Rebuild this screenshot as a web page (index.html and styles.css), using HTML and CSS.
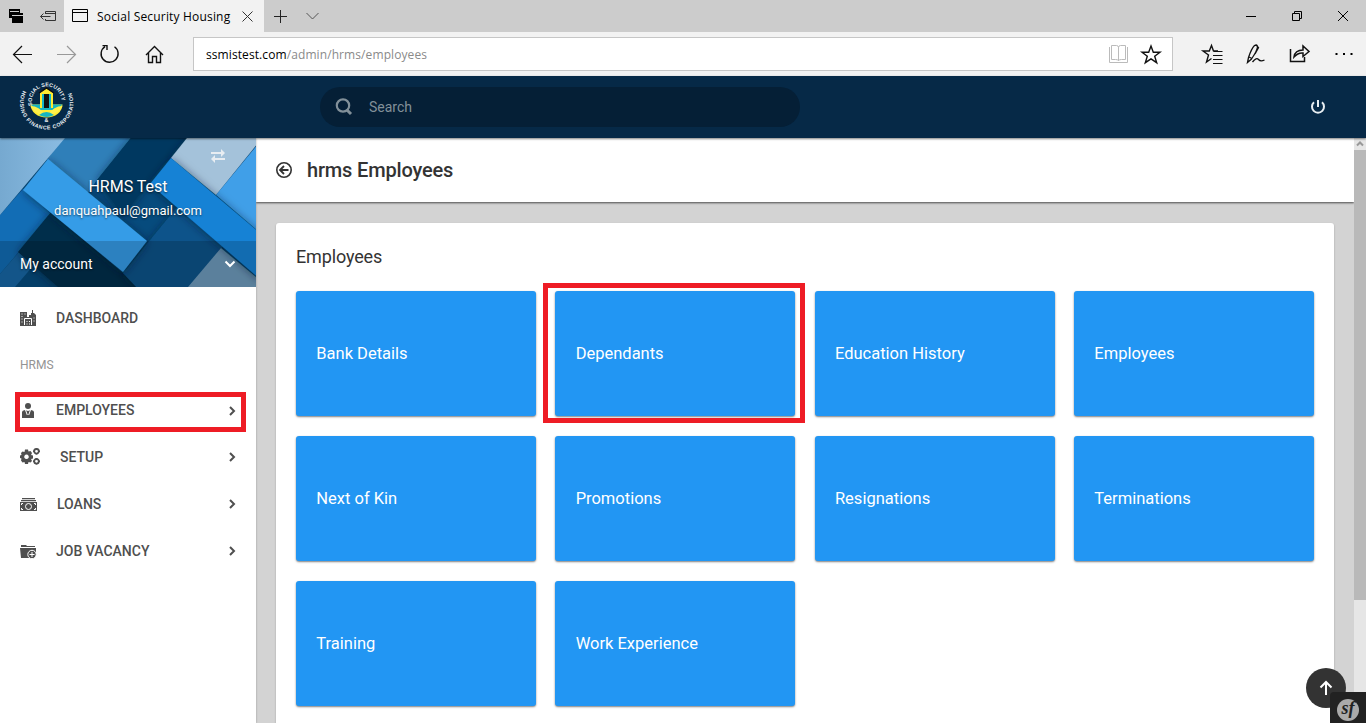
FILE: index.html
```html
<!DOCTYPE html>
<html lang="en">
<head>
<meta charset="utf-8">
<title>Social Security Housing</title>
<link rel="stylesheet" href="styles.css">
</head>
<body>
<div class="window">
  <div class="tabbar">
    <svg class="tab-tools" width="64" height="32" fill="none" stroke="#333">
      <path d="M9 9h11v4H12v5H9z" fill="#000" stroke="none"/><path d="M12 13h11v10H12z" fill="#000" stroke="none"/><path d="M10 11.500h9M12 15.500h11" stroke="#ccc"/>
      <path d="M45.500 14v-2.500h10v9h-10V19M45 13.500h10M40.500 16.500h10M43.500 13.500l-3 3 3 3"/>
    </svg>
    <div class="tab">
      <svg width="16" height="14" fill="none" stroke="#000"><path d="M.5.5h15v12H.5zM0 3.500h16"/></svg>
      <span class="tab-title">Social Security Housing</span>
      <svg width="11" height="11" stroke="#333" fill="none"><path d="M.5.5l10 10M10.500.5l-10 10"/></svg>
    </div>
    <svg width="60" height="32" fill="none" stroke="#222"><path d="M10 16.500h13M16.500 10v13"/><path d="M42.500 13l6 6 6-6" stroke="#555"/></svg>
    <svg class="win-buttons" width="140" height="32" fill="none" stroke="#000"><path d="M20 16.500h10M66.500 13.500h7v7h-7zM68.500 13v-1.500h7v7H74M112 11l10 10M122 11l-10 10"/></svg>
  </div>
  <div class="toolbar">
    <svg width="193" height="44" fill="none" stroke="#111" stroke-width="1.200">
      <path d="M13.500 22.500h18.500M22 14l-8.500 8.500 8.500 8.500"/>
      <path d="M57 22.500h18.500M67 14l8.500 8.500-8.500 8.500" stroke="#999"/>
      <path d="M114.500 14.800a8.500 8.500 0 1 1-9.500-.2M102.500 13.600h4.500v4.500" stroke-width="1.400"/>
      <path d="M146 23l8.500-8.500L163 23M148.500 21v9.500h4v-6h4v6h4V21" stroke-width="1.400"/>
    </svg>
    <div class="address">
      <span class="url"><span class="host">ssmistest.com</span>/admin/hrms/employees</span>
      <svg width="64" height="32" fill="none"><path d="M1.500 9V24.500h18V9M3.500 7.500h5q2 0 2 2v13q-1-1-3-1h-4zM17.500 7.500h-5q-2 0-2 2v13q1-1 3-1h4z" stroke="#bbb"/><path d="M43 8l2.300 6.200h6.700l-5.300 4.100 2 6.400-5.700-3.900-5.700 3.900 2-6.400-5.300-4.100h6.700z" stroke="#111" stroke-width="1.400"/></svg>
    </div>
    <svg width="193" height="44" fill="none" stroke="#111" stroke-width="1.200">
      <path d="M45 19h-4.500l-2-5.500-2.200 5.500H30l5.500 4-2 7 5-3.500" stroke-width="1.400"/><path d="M41 19.500h8.500M40 23.500h9.500M40 27.500h9.500M40 31.500h9.500"/>
      <path d="M74.500 30.500l1-5q3-9 6-12 3-1.500 3 1.500-.5 4-6 12zM76 25l3 1.500M83 13l2.500 2.500-3.500 6.500M79.500 30q4-5 6-2.500t6 .5" stroke-width="1.300"/>
      <path d="M117.500 17v12.500h14V25M121 25q1-7 9-7v-4l6 5.500-6 5v-3.500q-5-.5-9 4z" stroke-width="1.500"/>
      <path d="M162.500 22h2M170 22h2M177.500 22h2" stroke="#000" stroke-width="2"/>
    </svg>
  </div>

  <header class="topbar">
    <svg class="logo" width="62" height="60">
      <defs><path id="arc-top" d="M17.400 28.500A14.900 14.900 0 1 1 46 28.500"/><path id="arc-bottom" d="M8 13.500A26.700 26.700 0 1 0 54.500 12"/></defs>
      <path d="M15.500 27.500h32a16 13 0 0 1-32 0z" fill="#ffeb31"/>
      <path d="M15.500 27.500h32q-3 4-10 5.500H25.500q-7-1.500-10-5.500z" fill="#16b5c0"/><path d="M15.500 29q9 0 14 8.500-9 1-14-8.500zM47.500 29q-9 0-14 8.500 9 1 14-8.500z" fill="#fff04a"/><path d="M24 38q7.500-6 15 0-7.500 4-15 0z" fill="#16b5c0"/>
      <path d="M25 16l6.500-4.500L38 16v15H25z" fill="#ffeb31"/><path d="M27 17h9v14h-9z" fill="#15b6c8"/><path d="M24 16l7.500-5 7.500 5" fill="none" stroke="#111" stroke-width="1.500"/><path d="M29 17h5v14h-5z" fill="#111"/>
      <text class="logo-text"><textPath href="#arc-top" textLength="50">SOCIAL SECURITY</textPath></text>
      <text class="logo-text"><textPath href="#arc-bottom" textLength="107">HOUSING FINANCE CORPORATION</textPath></text>
      <text class="logo-text" x="29.500" y="45">&amp;</text>
    </svg>
    <div class="search">
      <svg width="18" height="18" fill="none" stroke="#829099"><circle cx="8" cy="7.500" r="6.200" stroke-width="2.200"/><path d="M11.500 11.500l4.500 4.500" stroke-width="3"/></svg>
      <span>Search</span>
    </div>
    <svg class="power" width="16" height="16" fill="none" stroke="#e8eef2" stroke-width="2"><path d="M4 3.200a6 6 0 1 0 8 0M8 1v7"/></svg>
  </header>

  <div class="page">
    <aside class="sidebar">
      <div class="profile">
        <svg class="profile-art" width="256" height="149">
          <defs>
            <filter id="soft" x="-30%" y="-30%" width="160%" height="160%"><feDropShadow dx="0" dy="1" stdDeviation="4" flood-color="#001a33" flood-opacity=".6"/></filter>
            <linearGradient id="sky"><stop stop-color="#76a9d0"/><stop offset="1" stop-color="#8bbce2"/></linearGradient>
          </defs>
          <path fill="#064b7d" d="M0 0h256v149H0z"/>
          <path fill="#2f7fb9" d="M65-5h70L97 42l-10 14-40-34z"/>
          <g filter="url(#soft)"><path fill="#053960" d="M134-4h57l-40 46-28 36-26-36z"/></g>
          <path fill="#126db5" d="M23 51l28 25L0 136V77z"/>
          <path fill="#1767a5" d="M0 136l19-22 14 14-18 21H0z"/>
          <g filter="url(#soft)"><path fill="#052d4b" d="M51 74l88 75H58L18 114z"/></g>
          <g filter="url(#soft)"><path fill="#0a538a" d="M178 68l45 40-35 43h-50l-15-16z"/></g>
          <path fill="#6e9bbc" d="M221 110l35 29v10h-68z"/>
          <g filter="url(#soft)"><path fill="#a4c2da" d="M187 0h71v5l-42 52-45-37z"/></g>
          <path fill="#409fe8" d="M258 6l-42 51 42 36z"/>
          <g filter="url(#soft)"><path fill="#1482d5" d="M171 20l90 76v46L150 46z"/></g>
          <g filter="url(#soft)"><path fill="#369ce7" d="M48 21l99 82-24 31L23 52z"/></g>
          <path fill="url(#sky)" d="M0 0h65L0 77z"/>
        </svg>
        <div class="profile-body">
          <svg class="swap" width="16" height="14" fill="#e8edf2"><path d="M1 3h10V0l4 4-4 4V5H1zM15 9H5V6l-4 4 4 4v-3h10z"/></svg>
          <div class="name">HRMS Test</div>
          <div class="email">danquahpaul@gmail.com</div>
          <div class="account"><span>My account</span><svg width="12" height="8" fill="none" stroke="#fff" stroke-width="2"><path d="M1.500 1.500L6 6l4.500-4.500"/></svg></div>
        </div>
      </div>
      <nav class="menu">
        <a class="item"><svg class="ico" width="20" height="18"><path d="M0 2h7v5h2V5h2V3h1V0h1v3h1l2 2v11H0z"/><path d="M1.500 4h1M4.500 4h1M1.500 6.500h1M1.500 9h1M1.500 12h1M13.500 8h1M13.500 11h1M4.500 15V8.500h7V15M6.500 11.500h1M9 11.500h1M6.500 14h1M9 14h1" fill="none" stroke="#fff"/></svg><span>DASHBOARD</span></a>
        <div class="section">HRMS</div>
        <a class="item"><svg class="ico" width="20" height="16"><circle cx="8" cy="3" r="3"/><path d="M2 15V9q0-1.500 3-2l3 1 3-1q3 .5 3 2v6z"/><path d="M5.500 7L7.300 12M10.500 7L8.700 12" stroke="#fff" fill="none"/></svg><span>EMPLOYEES</span><svg class="chev" width="8" height="10"><path d="M2 1l4 4-4 4"/></svg></a>
        <a class="item raised setup"><svg class="ico" width="21" height="17"><path d="M5 1.500h3l.5 2 2-.5 1.500 2-1 2 2 .5v3l-2 .5 1 2-1.500 1.500-2-.5-.5 2H5l-.5-2-2 .5L1 12.500l.5-2L0 10V7.500L1.500 7 1 5l1.500-1.500 2 .5zM6.500 6.500a2.300 2.300 0 1 0 .01 0" fill-rule="evenodd"/><path d="M16.500 5.600a2.300 2.300 0 1 0 0-4.600 2.300 2.300 0 0 0 0 4.600M16.500 15.600a2.300 2.300 0 1 0 0-4.600 2.300 2.300 0 0 0 0 4.600" fill="none" stroke="#4f4f4f" stroke-width="1.800"/><path d="M16.500 0v6.500M13 3.300h7M16.500 10v6.500M13 13.300h7" stroke="#4f4f4f" stroke-width="1.600" stroke-dasharray="1 5"/></svg><span>SETUP</span><svg class="chev" width="8" height="10"><path d="M2 1l4 4-4 4"/></svg></a>
        <a class="item raised loans"><svg class="ico" width="20" height="16"><path d="M2 2h13v1.300H2zM1 4h15v1.300H1zM0 6h17v9H0z"/><circle cx="8.500" cy="10.500" r="3" fill="none" stroke="#fff"/><path d="M1.500 9V7.500H3M14 7.500h1.500V9M1.500 12v1.500H3M14 13.500h1.500V12" fill="none" stroke="#fff"/></svg><span>LOANS</span><svg class="chev" width="8" height="10"><path d="M2 1l4 4-4 4"/></svg></a>
        <a class="item raised"><svg class="ico" width="20" height="16"><path d="M1 2h5l1 1h8v1H1zM0 5h16v5l-4 5H1z"/><circle cx="12" cy="11.500" r="4.200" stroke="#fff"/><path d="M12 9v5M9.500 11.500h5" stroke="#fff"/></svg><span>JOB VACANCY</span><svg class="chev" width="8" height="10"><path d="M2 1l4 4-4 4"/></svg></a>
      </nav>
      <div class="mark mark-menu"></div>
    </aside>
    <main class="main">
      <div class="page-head">
        <svg width="16" height="16" fill="none" stroke="#333"><circle cx="8" cy="8" r="7.200" stroke-width="1.600"/><path d="M12.500 8H4.500M8 4L4 8l4 4" stroke-width="1.800"/></svg>
        <h1>hrms Employees</h1>
      </div>
      <section class="card">
        <h2>Employees</h2>
        <div class="tiles">
          <a class="tile">Bank Details</a>
          <a class="tile">Dependants<span class="mark mark-tile"></span></a>
          <a class="tile">Education History</a>
          <a class="tile">Employees</a>
          <a class="tile">Next of Kin</a>
          <a class="tile">Promotions</a>
          <a class="tile">Resignations</a>
          <a class="tile">Terminations</a>
          <a class="tile">Training</a>
          <a class="tile">Work Experience</a>
        </div>
      </section>
    </main>
    <div class="scrollbar"><svg width="12" height="12" fill="none" stroke="#999" stroke-width="2"><path d="M3 7.500l3-3 3 3"/></svg><div class="thumb"></div></div>
  </div>
  <div class="to-top"><svg width="14" height="16" fill="none" stroke="#fff" stroke-width="2"><path d="M7 15V2M1.500 7.500L7 2l5.500 5.500"/></svg></div>
  <div class="sf"><div class="sf-disc">sf</div></div>
</div>
</body>
</html>
```
FILE: styles.css
```css
* { box-sizing: border-box; }
body { margin: 0; font-family: Roboto, sans-serif; color: #333; }
svg { display: block; flex: none; }
.window { position: relative; width: 1366px; height: 723px; overflow: hidden; display: flex; flex-direction: column; background: #fff; }

.tabbar { height: 32px; flex: none; background: #ccc; display: flex; }
.tab { width: 200px; background: #f2f2f2; display: flex; align-items: center; padding: 0 11px 0 8px; }
.tab-title { flex: 1; margin-left: 9px; font: 12px "Open Sans", sans-serif; letter-spacing: .18px; color: #000; white-space: nowrap; }
.win-buttons { margin-left: auto; }
.toolbar { height: 44px; flex: none; background: #f2f2f2; display: flex; align-items: center; }
.address { width: 980px; height: 34px; background: #fff; border: 1px solid #c6c6c6; display: flex; align-items: center; justify-content: space-between; padding-left: 12px; }
.url { font: 12px "Open Sans", sans-serif; letter-spacing: .09px; color: #8a8a8a; }
.host { color: #000; }

.topbar { position: relative; z-index: 2; height: 62px; flex: none; background: #062947; display: flex; align-items: center; padding: 0 40px 0 15px; box-shadow: 0 1px 2px rgba(0, 0, 0, .5); }
.logo { overflow: visible; }
.logo-text { font: bold 5.300px "Liberation Sans", sans-serif; fill: #eef3f6; }
.search { width: 480px; height: 40px; margin-left: 243px; border-radius: 20px; background: #051f36; display: flex; align-items: center; gap: 16px; padding-left: 15px; font-size: 14px; color: #829099; }
.power { margin-left: auto; }

.page { flex: 1; min-height: 0; display: flex; }
.sidebar { position: relative; z-index: 1; width: 256px; flex: none; background: #fff; box-shadow: 0 0 2px rgba(0, 0, 0, .3); }
.profile { position: relative; height: 149px; overflow: hidden; color: #fff; text-shadow: 0 1px 2px rgba(0, 0, 0, .6); }
.profile-art { position: absolute; inset: 0; }
.profile-body { position: relative; height: 149px; display: flex; flex-direction: column; text-align: center; }
.swap { align-self: flex-end; margin: 11px 30px 0 0; }
.name { font-size: 16px; line-height: 20px; margin-top: 14px; }
.email { font-size: 13px; line-height: 18px; margin-top: 5px; }
.account { margin-top: auto; height: 46px; background: rgba(0, 0, 0, .17); display: flex; align-items: center; justify-content: space-between; padding: 0 20px; font-size: 14px; }

.menu { padding-top: 8px; }
.item { height: 47px; display: flex; align-items: center; padding: 0 20px; font-size: 14px; font-weight: 500; color: #4f4f4f; }
.item span { margin-left: 16px; flex: 1; padding-bottom: 2px; }
.item.setup span { margin-left: 19px; }
.item.loans span { margin-left: 17px; }
.item.raised svg { margin-bottom: 2px; }
.ico { fill: #4f4f4f; }
.chev { fill: none; stroke: #4f4f4f; stroke-width: 2; }
.section { height: 45px; padding-left: 20px; font-size: 12px; line-height: 47px; color: #949494; }
.mark { position: absolute; border: 5px solid #ee1c25; }
.mark-menu { left: 15px; top: 254px; width: 231px; height: 40px; }
.mark-tile { left: -12px; top: -8px; width: 262px; height: 140px; }

.main { flex: 1; min-width: 0; background: #d3d3d3; display: flex; flex-direction: column; }
.page-head { height: 64px; flex: none; background: #fff; display: flex; align-items: center; gap: 15px; padding-left: 20px; box-shadow: 0 1px 2px rgba(0, 0, 0, .65); }
h1 { margin: 0; font-size: 20px; font-weight: 500; letter-spacing: -.17px; }
.card { margin: 21px 20px 0; flex: 1 0 560px; background: #fff; border-radius: 3px; box-shadow: 0 1px 2px rgba(0, 0, 0, .25); padding: 22px 20px; }
h2 { margin: 0 0 22px; font-size: 18px; line-height: 24px; font-weight: 400; letter-spacing: -.15px; }
.tiles { display: grid; grid-template-columns: repeat(4, 240px); justify-content: space-between; row-gap: 20px; }
.tile { position: relative; height: 125px; background: #2296f3; border-radius: 3px; box-shadow: 0 1px 2px rgba(0, 0, 0, .5); color: #fff; display: flex; align-items: center; padding-left: 20.300px; font-size: 16.500px; }

.scrollbar { width: 12px; background: #e6e6e6; }
.thumb { height: 450px; background: #b9b9b9; }
.to-top { position: absolute; left: 1306px; top: 668px; width: 40px; height: 40px; border-radius: 50%; background: #333; display: flex; align-items: center; justify-content: center; }
.sf { position: absolute; right: 0; bottom: 0; width: 36px; height: 31px; background: #222; border-top-left-radius: 4px; padding: 7px 0 0 7px; }
.sf-disc { width: 22px; height: 22px; border-radius: 50%; background: #aaa; color: #222; font: italic bold 18px/18px "Liberation Serif", serif; text-align: center; }
```
